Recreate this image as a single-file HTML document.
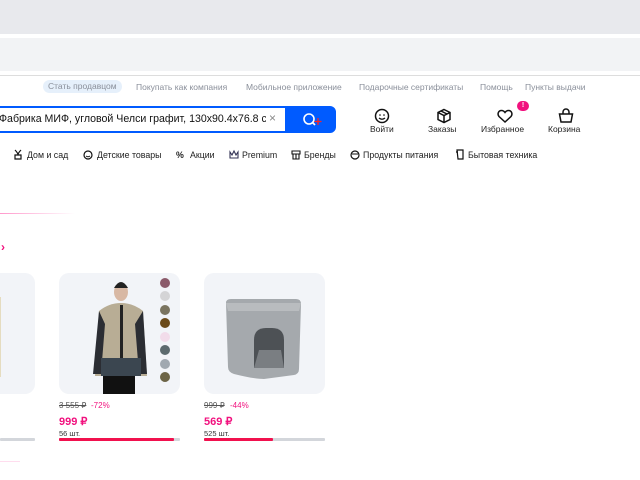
<!DOCTYPE html>
<html><head><meta charset="utf-8"><style>
*{margin:0;padding:0;box-sizing:border-box}
body{width:640px;height:480px;position:relative;overflow:hidden;background:#fff;font-family:"Liberation Sans","Noto Sans CJK SC",sans-serif;color:#070707}
.a{position:absolute;white-space:nowrap}
.top{font-size:8.5px;color:#8a8f9a;top:82px}
.ic{position:absolute;top:107px;width:18px;height:18px}
.lb{font-size:8.5px;top:124px;color:#222}
.cat{font-size:8.8px;top:150px;color:#222}
.ci{position:absolute;top:149px;width:10px;height:11px}
.card{position:absolute;top:273px;width:121px;height:121px;background:#f2f4f8;border-radius:10px;overflow:hidden}
.old{font-size:8px;color:#555;text-decoration:line-through;top:401px}
.disc{font-size:8px;color:#f1117e;top:401px}
.pr{font-size:11px;font-weight:bold;color:#f1117e;top:415px}
.qt{font-size:7.5px;color:#333;top:429px}
.bar{position:absolute;top:438px;height:3px;background:#d3d6db;border-radius:1px}
.dot{position:absolute;left:101px;width:10px;height:10px;border-radius:50%}
</style></head><body>
<div class="a" style="left:0;top:0;width:640px;height:34px;background:#e8e9ed"></div>
<div class="a" style="left:0;top:38px;width:640px;height:33px;background:#f2f3f5"></div>
<div class="a" style="left:0;top:75px;width:640px;height:1px;background:#ddd"></div>

<div class="a top" style="left:43px;top:80px;background:#e6f0fb;border-radius:7px;padding:1px 5px;height:13px;line-height:11px">Стать продавцом</div>
<div class="a top" style="left:136px">Покупать как компания</div>
<div class="a top" style="left:246px">Мобильное приложение</div>
<div class="a top" style="left:359px">Подарочные сертификаты</div>
<div class="a top" style="left:480px">Помощь</div>
<div class="a top" style="left:525px">Пункты выдачи</div>

<div class="a" style="left:-10px;top:106px;width:346px;height:27px;border:2px solid #005bff;border-radius:6px;background:#005bff"></div>
<div class="a" style="left:-8px;top:108px;width:293px;height:23px;background:#fff;border-radius:4px"></div>
<div class="a" style="left:-1px;top:113px;font-size:10.6px;color:#111">Фабрика МИФ, угловой Челси графит, 130х90.4х76.8 см</div>
<div class="a" style="left:266px;top:108px;width:19px;height:23px;background:#fff"></div>
<div class="a" style="left:269px;top:111px;font-size:12px;color:#888">×</div>
<svg class="a" style="left:302px;top:112px" width="20" height="16" viewBox="0 0 20 16"><circle cx="7" cy="7" r="5" fill="none" stroke="#fff" stroke-width="1.6"/><path d="M10.5 10.5 13 13" stroke="#fff" stroke-width="1.6"/><path d="M16 6v7M12.5 9.5h7" stroke="#f22" stroke-width="1.3"/></svg>

<svg class="ic" style="left:373px" viewBox="0 0 18 18"><circle cx="9" cy="9" r="6.5" fill="none" stroke="#111" stroke-width="1.5"/><path d="M6 11q3 2.5 6 0" fill="none" stroke="#111" stroke-width="1.3"/><circle cx="7" cy="8" r=".8"/><circle cx="11" cy="8" r=".8"/></svg>
<svg class="ic" style="left:435px" viewBox="0 0 18 18"><path d="M9 2.5 15 5.5v7L9 15.5 3 12.5v-7z M3 5.5 9 8.5 15 5.5 M9 8.5v7 M6 4l6 3" fill="none" stroke="#111" stroke-width="1.5"/></svg>
<svg class="ic" style="left:496px" viewBox="0 0 18 18"><path d="M9 15 3 9.5C1 7 2.5 3.5 5.5 3.5 7 3.5 8.3 4.5 9 5.5 9.7 4.5 11 3.5 12.5 3.5 15.5 3.5 17 7 15 9.5z" fill="none" stroke="#111" stroke-width="1.5"/></svg>
<div class="a" style="left:517px;top:101px;width:12px;height:10px;border-radius:5px;background:#f1117e;color:#fff;font-size:7px;font-weight:bold;text-align:center;line-height:10px">!</div>
<svg class="ic" style="left:557px" viewBox="0 0 18 18"><path d="M6 7V5a3 3 0 0 1 6 0v2 M2.5 7h13l-1.5 8h-10z" fill="none" stroke="#111" stroke-width="1.5"/></svg>
<div class="a lb" style="left:370px">Войти</div>
<div class="a lb" style="left:428px">Заказы</div>
<div class="a lb" style="left:481px">Избранное</div>
<div class="a lb" style="left:548px">Корзина</div>

<svg class="ci" style="left:13px" viewBox="0 0 10 11"><path d="M2 1q3 3 3 5M8 1q-3 3-3 5M2 6h6v4H2z" fill="none" stroke="#111" stroke-width="1.2"/></svg>
<div class="a cat" style="left:27px">Дом и сад</div>
<svg class="ci" style="left:83px" viewBox="0 0 10 11"><circle cx="5" cy="6" r="4" fill="none" stroke="#111" stroke-width="1.2"/><path d="M3 7q2 1.5 4 0" stroke="#111" fill="none"/></svg>
<div class="a cat" style="left:97px">Детские товары</div>
<div class="a cat" style="left:176px;font-weight:bold">%</div>
<div class="a cat" style="left:190px">Акции</div>
<svg class="ci" style="left:229px" viewBox="0 0 10 11"><path d="M1 3l2 3 2-4 2 4 2-3v6H1z" fill="none" stroke="#335" stroke-width="1.1"/></svg>
<div class="a cat" style="left:242px">Premium</div>
<svg class="ci" style="left:291px" viewBox="0 0 10 11"><path d="M1 2h8v3H1zM2 5v5h6V5M5 5v5" fill="none" stroke="#111" stroke-width="1.1"/></svg>
<div class="a cat" style="left:304px">Бренды</div>
<svg class="ci" style="left:350px" viewBox="0 0 10 11"><circle cx="5" cy="6" r="4" fill="none" stroke="#111" stroke-width="1.2"/><path d="M2 5h6" stroke="#111"/></svg>
<div class="a cat" style="left:363px">Продукты питания</div>
<svg class="ci" style="left:455px" viewBox="0 0 10 11"><path d="M2 1h6v9H3z M1 3h2" fill="none" stroke="#111" stroke-width="1.2"/></svg>
<div class="a cat" style="left:468px">Бытовая техника</div>

<div class="a" style="left:0;top:213px;width:75px;height:1px;background:linear-gradient(90deg,#f9c,#fff)"></div>
<div class="a" style="left:1px;top:240px;font-size:12px;font-weight:bold;color:#f1117e">›</div>
<div class="a" style="left:0;top:461px;width:20px;height:1px;background:#fde"></div>

<div class="card" style="left:-86px"><div style="position:absolute;left:85px;top:24px;width:2px;height:80px;background:#e5dcc0"></div></div>
<div class="bar" style="left:0;width:35px"></div>

<div class="card" style="left:59px">
<svg style="position:absolute;left:30px;top:5px" width="60" height="116" viewBox="0 0 60 116"><ellipse cx="32" cy="14" rx="7" ry="9" fill="#d8b8a4"/><path d="M25 10q7-12 14 0" fill="#222"/><path d="M10 33q10-8 22-8 12 0 22 8l4 65H6z" fill="#b8ad95"/><path d="M10 33 4 96h8l4-50zM54 33l4 63h-8l-4-50z" fill="#2b2d33"/><path d="M31 27h3v70h-3z" fill="#222"/><path d="M12 80h40v18H12z" fill="#3b4650"/><path d="M14 98h32v18H14z" fill="#111"/></svg>
<div class="dot" style="top:5px;background:#8b5a6a"></div><div class="dot" style="top:18px;background:#d4d4d6"></div><div class="dot" style="top:32px;background:#7a7460"></div><div class="dot" style="top:45px;background:#6b4a1a"></div><div class="dot" style="top:59px;background:#f2dcea"></div><div class="dot" style="top:72px;background:#5c6a6e"></div><div class="dot" style="top:86px;background:#a0a8b0"></div><div class="dot" style="top:99px;background:#6c6446"></div>
</div>
<div class="a old" style="left:59px">3 555 ₽</div><div class="a disc" style="left:91px">-72%</div>
<div class="a pr" style="left:59px">999 ₽</div>
<div class="a qt" style="left:59px">56 шт.</div>
<div class="bar" style="left:59px;width:121px"></div><div class="bar" style="left:59px;width:115px;background:#f1114e"></div>

<div class="card" style="left:204px">
<svg style="position:absolute;left:20px;top:25px" width="80" height="85" viewBox="0 0 80 85"><path d="M2 5q0-4 5-4h65q5 0 5 5l-2 65q0 5-5 6l-30 4q-10 0-30-5-6-2-6-7z" fill="#a5a9ad"/><path d="M2 5h75l-2 8H4z" fill="#b9bcbf"/><path d="M30 70V42q0-12 12-12h6q12 0 12 12v28z" fill="#4d5155"/><path d="M30 70l5-18h22l3 18z" fill="#7a7e82"/></svg>
</div>
<div class="a old" style="left:204px">999 ₽</div><div class="a disc" style="left:230px">-44%</div>
<div class="a pr" style="left:204px">569 ₽</div>
<div class="a qt" style="left:204px">525 шт.</div>
<div class="bar" style="left:204px;width:121px"></div><div class="bar" style="left:204px;width:69px;background:#f1114e"></div>
</body></html>
